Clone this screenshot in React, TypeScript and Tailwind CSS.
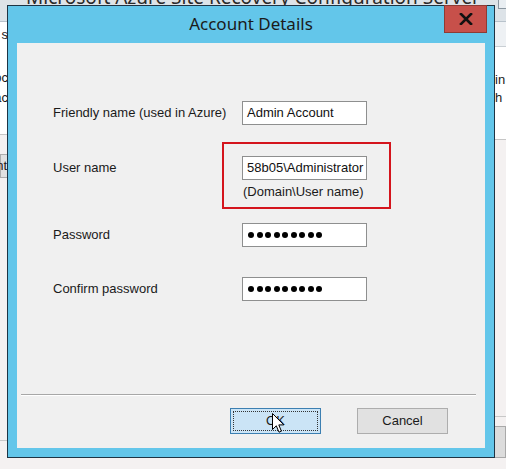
import { ReactNode } from 'react';

const BackgroundWindow = () => {
  return (
    <div className="flex h-full flex-col">
      {/* title bar of the window behind */}
      <div className="relative h-[22px] shrink-0 border-b border-[#b8c2cb] bg-[#dde3e8]">
        <div className="absolute left-0 right-0 top-[-14px] text-center font-['Noto_Sans',sans-serif] text-[19px] leading-[22px] text-[#2a2a2a]">
          Microsoft Azure Site Recovery Configuration Server
        </div>
        <div className="absolute right-[-2px] top-[-2px] h-[11px] w-[10px] border border-[#8a96a0] bg-[#e9eef2]" />
      </div>

      <div className="flex flex-1 justify-between">
        {/* left edge */}
        <div className="flex w-[8px] flex-col overflow-hidden text-[13px] leading-[16px] text-[#1a1a1a]">
          <div className="flex h-[113px] flex-col items-end border-b border-[#c6c6c6] bg-white">
            <span className="mt-[5px]">s</span>
            <span className="mt-[27px]">oc</span>
            <span className="mt-[4px]">ac</span>
          </div>
          <div className="mt-[19px] flex h-[24px] items-center justify-end border border-[#adadad] bg-[#e1e1e1]">
            nt
          </div>
          <div className="h-[263px] border-b border-[#c8c8c8]" />
          <div className="flex-1 bg-[#f4f1f1]" />
        </div>

        {/* right edge */}
        <div className="flex w-[12px] flex-col overflow-hidden text-[13px] leading-[16px] text-[#1a1a1a]">
          <div className="h-[25px] border-b border-[#c9cfd4] bg-[#eef1f4]" />
          <div className="flex h-[93px] flex-col border-b border-[#c6c6c6] bg-white pl-[1px]">
            <span className="mt-[25px]">in</span>
            <span className="mt-[2px]">h</span>
          </div>
          <div className="h-[277px] border-b border-[#c8c8c8]" />
          <div className="mt-[9px] h-[32px] border border-[#a9a9a9] bg-[#dcdcdc]" />
        </div>
      </div>
    </div>
  );
};

const TextBox = ({ children }: { children: ReactNode }) => (
  <div className="flex h-[24px] w-[125px] items-center overflow-hidden whitespace-nowrap border border-[#8e8f8f] bg-white pl-[4px] text-[13px] text-[#111]">
    {children}
  </div>
);

const Dots = () => (
  <div className="flex gap-[2.5px] pl-[1px]">
    {Array.from({ length: 9 }).map((_, i) => (
      <span key={i} className="h-[6px] w-[6px] rounded-full bg-black" />
    ))}
  </div>
);

const Row = ({ label, className, children }: { label: string; className?: string; children: ReactNode }) => (
  <div className={`flex items-start ${className ?? ''}`}>
    <div className="flex h-[24px] w-[189px] items-center text-[13px] text-[#1a1a1a]">{label}</div>
    <div className="relative">{children}</div>
  </div>
);

const Cursor = () => (
  <svg className="absolute left-[41px] top-[4px]" width="13" height="21" viewBox="0 0 13 21">
    <path
      d="M0.5 0.5 L0.5 16.5 L4.3 12.8 L7 19.2 L9.4 18.2 L6.8 11.9 L11.8 11.9 Z"
      fill="white"
      stroke="black"
      strokeWidth="1"
      strokeLinejoin="round"
    />
  </svg>
);

const AccountDialog = () => {
  return (
    <div className="absolute left-[7px] top-[5px] flex h-[453px] w-[488px] flex-col border border-[#1e3444] bg-[#63c6ea]">
      {/* title bar */}
      <div className="relative flex h-[37px] shrink-0 items-center justify-center pb-[2px] font-['Noto_Sans',sans-serif] text-[17px] text-[#1b1b1b]">
        Account Details
        <div className="absolute right-[7px] top-[-1px] flex h-[28px] w-[43px] items-center justify-center border border-[#8e3b34] bg-[#c7504a]">
          <svg width="14" height="12" viewBox="0 0 14 12">
            <path d="M2 1 L12 11 M12 1 L2 11" stroke="#111" strokeWidth="2.6" strokeLinecap="square" />
          </svg>
        </div>
      </div>

      {/* client area */}
      <div className="mx-[9px] mb-[9px] flex flex-1 flex-col bg-[#f0f0f0]">
        <div className="flex flex-col pl-[36px] pt-[58px]">
          <Row label="Friendly name (used in Azure)">
            <TextBox>Admin Account</TextBox>
          </Row>
          <Row label="User name" className="mt-[31px]">
            <TextBox>58b05\Administrator</TextBox>
            <div className="mt-[4px] pl-[1px] text-[13px] leading-[16px] text-[#1a1a1a]">(Domain\User name)</div>
            <div className="absolute left-[-20px] top-[-14px] h-[67px] w-[169px] border-2 border-[#d4141c]" />
          </Row>
          <Row label="Password" className="mt-[23px]">
            <TextBox>
              <Dots />
            </TextBox>
          </Row>
          <Row label="Confirm password" className="mt-[30px]">
            <TextBox>
              <Dots />
            </TextBox>
          </Row>
        </div>

        <div className="mt-auto ml-[4px] mr-[9px] border-t border-b border-t-[#a7a7a7] border-b-white" />

        <div className="flex justify-end gap-[36px] pb-[14px] pr-[37px] pt-[12px] text-[13px] text-[#1a1a1a]">
          <div className="relative flex h-[26px] w-[91px] items-center justify-center border border-[#3c7fb1] bg-[#cbe4f6]">
            <div className="absolute inset-[2px] border border-dotted border-[#333]" />
            OK
            <Cursor />
          </div>
          <div className="flex h-[26px] w-[91px] items-center justify-center border border-[#adadad] bg-[#e1e1e1]">
            Cancel
          </div>
        </div>
      </div>
    </div>
  );
};

const App = () => {
  return (
    <div className="relative h-[469px] w-[506px] overflow-hidden bg-[#f4f1f1] font-['Liberation_Sans',Arial,sans-serif]">
      <BackgroundWindow />
      <AccountDialog />
    </div>
  );
};

export default App;
